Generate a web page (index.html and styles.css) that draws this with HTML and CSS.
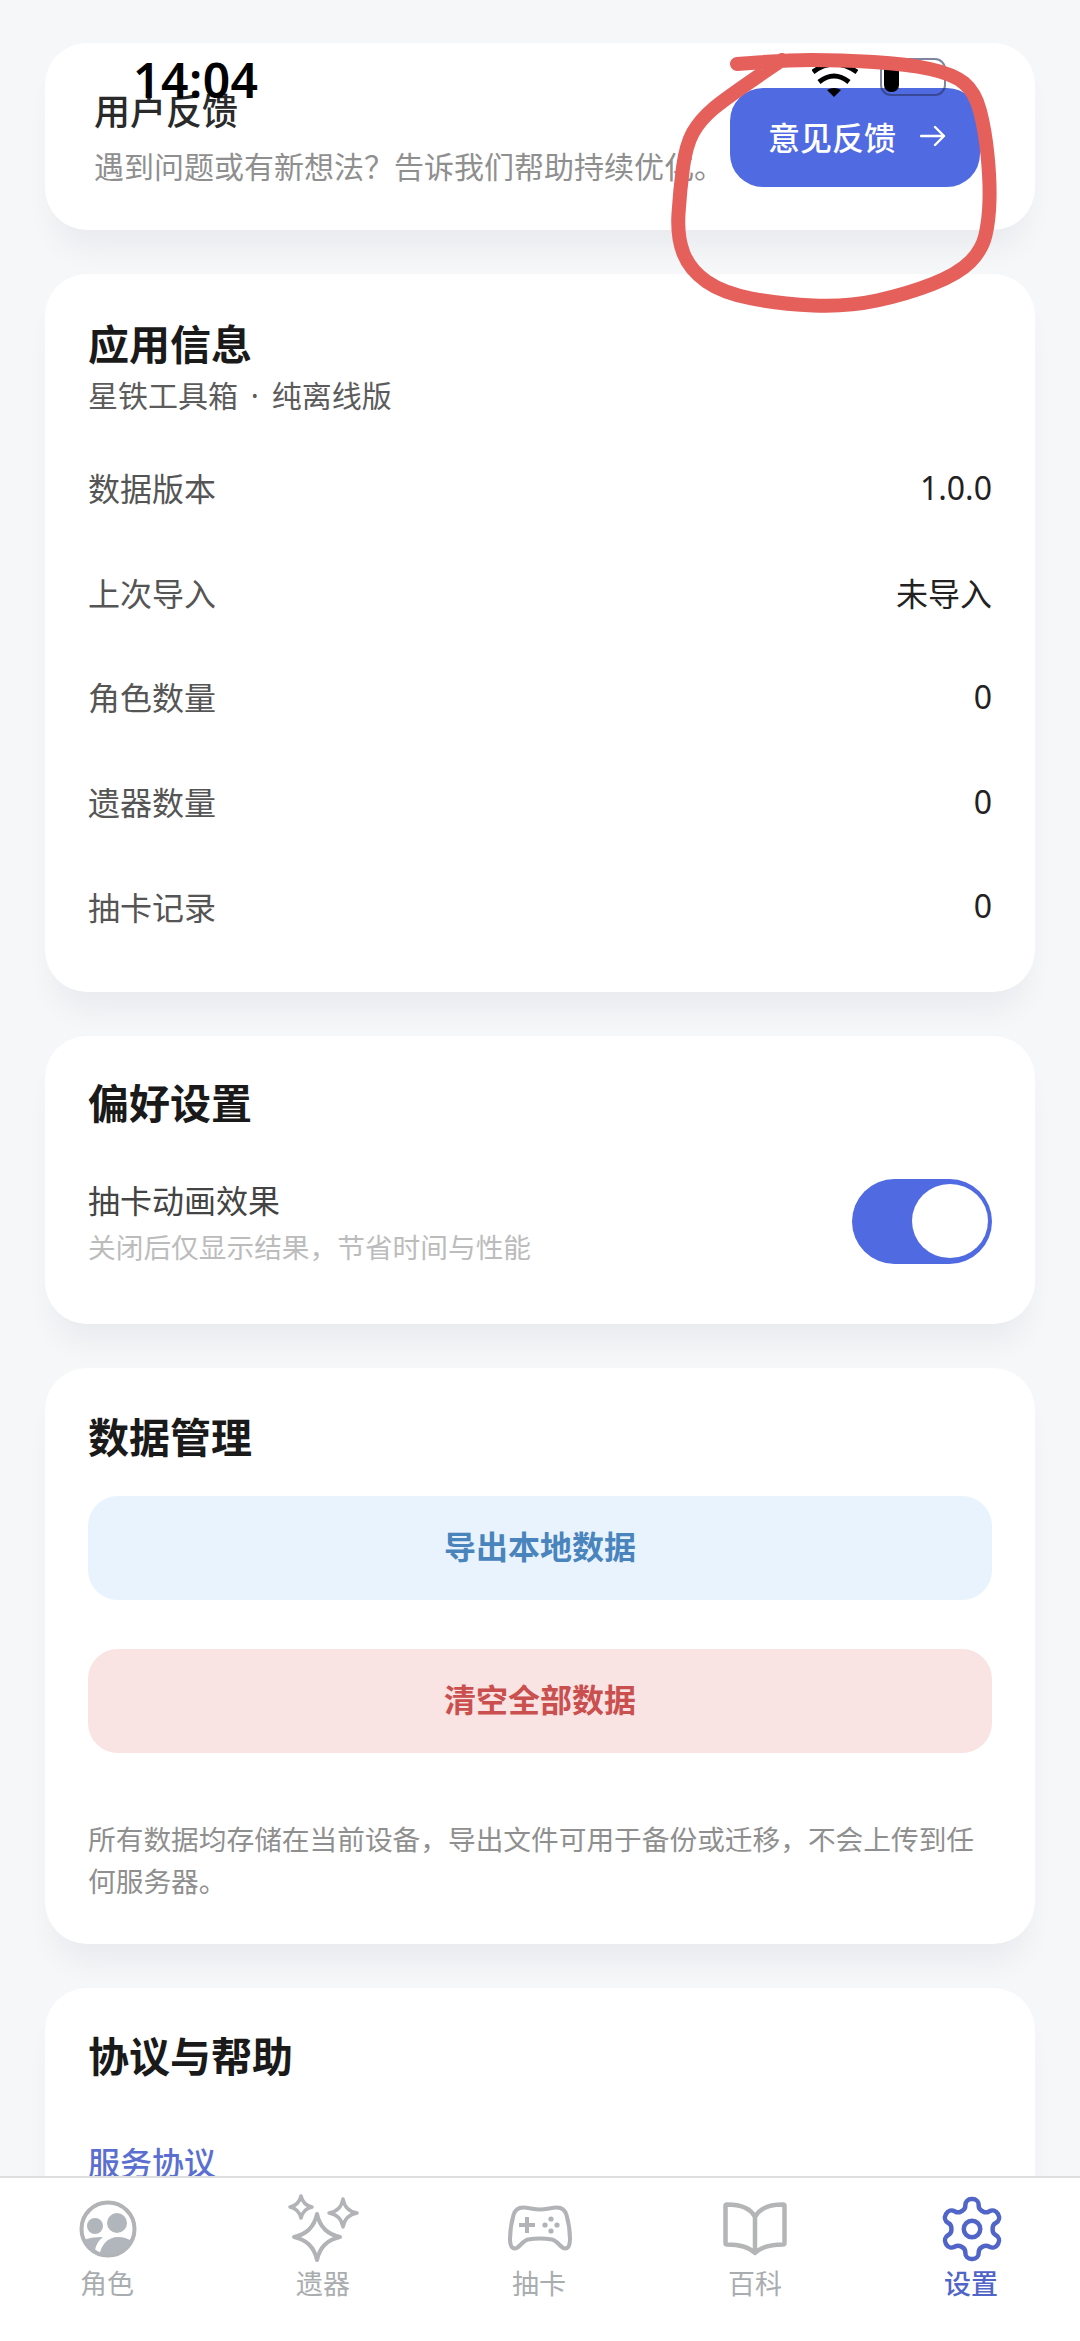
FILE: index.html
```html
<!DOCTYPE html>
<html lang="zh-CN">
<head>
    <meta charset="UTF-8">
    <meta name="viewport" content="width=device-width, initial-scale=1.0">
    <title>设置</title>
    <link rel="stylesheet" href="styles.css">
</head>
<body>
    <div class="status-bar">
        <span class="status-time">14:04</span>
        <div class="status-icons">
            <svg class="wifi-icon" viewBox="0 0 46 38" width="46" height="38">
                <path d="M22 38 L15 31 Q22 27 29 31 Z" fill="#000"/>
                <path d="M7 23 Q22 11 37 23" fill="none" stroke="#000" stroke-width="5"/>
                <path d="M1 13 Q22 -3 45 13" fill="none" stroke="#000" stroke-width="5"/>
            </svg>
            <div class="battery"><div class="battery-fill"></div></div>
        </div>
    </div>

    <main class="content">
        <section class="card feedback-card">
            <div class="feedback-text">
                <h2 class="feedback-title">用户反馈</h2>
                <p class="feedback-desc">遇到问题或有新想法&#xFF1F;告诉我们帮助持续优化。</p>
            </div>
            <a class="feedback-btn" href="#">
                <span>意见反馈</span>
                <svg viewBox="0 0 26 22" width="26" height="22">
                    <path d="M1 11 H24 M15 2 L24 11 L15 20" fill="none" stroke="#fff" stroke-width="2.4" stroke-linecap="round" stroke-linejoin="round"/>
                </svg>
            </a>
        </section>

        <section class="card info-card">
            <h2 class="card-title">应用信息</h2>
            <p class="card-sub">星铁工具箱<span class="sub-dot"> · </span>纯离线版</p>
            <div class="info-row"><span>数据版本</span><span class="info-value">1.0.0</span></div>
            <div class="info-row"><span>上次导入</span><span class="info-value">未导入</span></div>
            <div class="info-row"><span>角色数量</span><span class="info-value">0</span></div>
            <div class="info-row"><span>遗器数量</span><span class="info-value">0</span></div>
            <div class="info-row"><span>抽卡记录</span><span class="info-value">0</span></div>
        </section>

        <section class="card pref-card">
            <h2 class="card-title">偏好设置</h2>
            <div class="pref-row">
                <div>
                    <div class="pref-label">抽卡动画效果</div>
                    <div class="pref-hint">关闭后仅显示结果&#xFF0C;节省时间与性能</div>
                </div>
                <div class="toggle"><div class="toggle-knob"></div></div>
            </div>
        </section>

        <section class="card data-card">
            <h2 class="card-title">数据管理</h2>
            <button class="data-btn export-btn">导出本地数据</button>
            <button class="data-btn clear-btn">清空全部数据</button>
            <p class="data-note">所有数据均存储在当前设备&#xFF0C;导出文件可用于备份或迁移&#xFF0C;不会上传到任何服务器。</p>
        </section>

        <section class="card help-card">
            <h2 class="card-title">协议与帮助</h2>
            <a class="help-link" href="#">服务协议</a>
        </section>
    </main>

    <nav class="tab-bar">
        <a class="tab" href="#">
            <svg class="tab-icon" viewBox="0 0 64 64">
                <clipPath id="faceClip"><circle cx="32" cy="31" r="26"/></clipPath>
                <circle cx="32" cy="31" r="26.5" fill="none" stroke="#b1b3b6" stroke-width="4"/>
                <circle cx="19" cy="28" r="8" fill="#b1b6bc"/>
                <circle cx="41" cy="25" r="10" fill="#b1b6bc"/>
                <g clip-path="url(#faceClip)" fill="#b1b6bc">
                    <path d="M4 44 C10 40 18 39 27 39 C22 43 19 48 19 55 L19 62 L4 62 Z"/>
                    <path d="M23 62 C23 50 30 39 42 39 C48 39 54 41 60 46 L60 62 Z"/>
                </g>
            </svg>
            <span class="tab-label">角色</span>
        </a>
        <a class="tab" href="#">
            <svg class="tab-icon" viewBox="0 0 64 64" fill="none" stroke="#b1b3b6" stroke-linejoin="round">
                <path stroke-width="4" d="M25 16 Q29 35 48 39 Q29 43 25 62 Q21 43 2 39 Q21 35 25 16 Z"/>
                <path stroke-width="3.5" d="M9 -2 Q11 7 20 9 Q11 11 9 20 Q7 11 -2 9 Q7 7 9 -2 Z"/>
                <path stroke-width="3.5" d="M51 1 Q53 13 65 15 Q53 17 51 29 Q49 17 37 15 Q49 13 51 1 Z"/>
            </svg>
            <span class="tab-label">遗器</span>
        </a>
        <a class="tab" href="#">
            <svg class="tab-icon" viewBox="0 0 64 64" fill="none" stroke="#b1b3b6" stroke-width="4" stroke-linejoin="round">
                <path d="M15 9.5 C21 9.5 25 11.5 32 11.5 C39 11.5 43 9.5 49 9.5 C54 9.5 57 12 58.5 17 C60.5 24 62 33 62 41 C62 47 60 50.5 57 50.5 C53 50.5 50 43 44 41.5 C40 40.8 36 40.5 32 40.5 C28 40.5 24 40.8 20 41.5 C14 43 11 50.5 7 50.5 C4 50.5 2 47 2 41 C2 33 3.5 24 5.5 17 C7 12 10 9.5 15 9.5 Z"/>
                <path d="M19 19 V35 M11 27 H27"/>
                <g fill="#b1b3b6" stroke="none">
                    <circle cx="43" cy="21" r="2.6"/>
                    <circle cx="37" cy="27" r="2.6"/>
                    <circle cx="49" cy="27" r="2.6"/>
                    <circle cx="43" cy="33" r="2.6"/>
                </g>
            </svg>
            <span class="tab-label">抽卡</span>
        </a>
        <a class="tab" href="#">
            <svg class="tab-icon" viewBox="0 0 64 64" fill="none" stroke="#b3b5b7" stroke-width="4.5" stroke-linejoin="round">
                <path d="M31 19 C27 11 19 6.5 3 6.5 Q1.5 6.5 1.5 8 V45 Q1.5 46.5 3 46.5 C16 46.5 25 49 31 55 C37 49 46 46.5 59 46.5 Q60.5 46.5 60.5 45 V8 Q60.5 6.5 59 6.5 C43 6.5 35 11 31 19 Z M31 19 V55"/>
            </svg>
            <span class="tab-label">百科</span>
        </a>
        <a class="tab tab-active" href="#">
            <svg class="tab-icon" viewBox="1.33 1.67 21.33 21.33" fill="none" stroke="#5165c8" stroke-width="1.5" stroke-linejoin="round">
                <path d="M12.22 2h-.44a2 2 0 0 0-2 2v.18a2 2 0 0 1-1 1.73l-.43.25a2 2 0 0 1-2 0l-.15-.08a2 2 0 0 0-2.73.73l-.22.38a2 2 0 0 0 .73 2.73l.15.1a2 2 0 0 1 1 1.72v.51a2 2 0 0 1-1 1.74l-.15.09a2 2 0 0 0-.73 2.73l.22.38a2 2 0 0 0 2.73.73l.15-.08a2 2 0 0 1 2 0l.43.25a2 2 0 0 1 1 1.73V20a2 2 0 0 0 2 2h.44a2 2 0 0 0 2-2v-.18a2 2 0 0 1 1-1.73l.43-.25a2 2 0 0 1 2 0l.15.08a2 2 0 0 0 2.73-.73l.22-.39a2 2 0 0 0-.73-2.73l-.15-.08a2 2 0 0 1-1-1.74v-.5a2 2 0 0 1 1-1.74l.15-.09a2 2 0 0 0 .73-2.73l-.22-.38a2 2 0 0 0-2.73-.73l-.15.08a2 2 0 0 1-2 0l-.43-.25a2 2 0 0 1-1-1.73V4a2 2 0 0 0-2-2z"/>
                <circle cx="12" cy="12" r="2.75"/>
            </svg>
            <span class="tab-label">设置</span>
        </a>
    </nav>

    <!-- red pen circle drawn over the screenshot -->
    <svg class="annotation" viewBox="0 0 1080 340" width="1080" height="340">
        <path d="M737 64 Q783 60 811.5 60 Q840 60 873.5 62 Q907 64 930 69 Q953 74 964 83 Q975 92 980 111 Q985 130 987.5 155 Q990 180 989.5 200 Q989 220 985.5 235 Q982 250 970 262 Q958 274 932.5 284 Q907 294 877 300.5 Q847 307 813.5 305.5 Q780 304 751.5 298.5 Q723 293 706.5 281.5 Q690 270 683.5 253.5 Q677 237 678.5 213.5 Q680 190 683 167.5 Q686 145 693 132.5 Q700 120 713.5 108.5 Q727 97 782 60" fill="none" stroke="#e55f5b" stroke-width="14" stroke-linecap="round" stroke-linejoin="round"/>
    </svg>
</body>
</html>
```

FILE: styles.css
```css
* {
    box-sizing: border-box;
}

body {
    margin: 0;
    height: 100vh;
    display: flex;
    flex-direction: column;
    overflow: hidden;
    background-color: #f6f7f9;
    font-family: "Noto Sans CJK SC", "Noto Sans", sans-serif;
    color: #222;
}

h2, p {
    margin: 0;
}

a {
    text-decoration: none;
}

/* status bar sits on top of the scrolled page */
.status-bar {
    position: absolute;
    top: 0;
    left: 0;
    right: 0;
    z-index: 5;
    display: flex;
    justify-content: space-between;
    padding: 48px 134px 0 133px;
}

.status-time {
    font-family: "Noto Sans", sans-serif;
    font-size: 48px;
    font-weight: 600;
    letter-spacing: 0.5px;
    line-height: 64px;
    color: #000;
}

.status-icons {
    display: flex;
    gap: 22px;
    padding-top: 11px;
}

.battery {
    width: 66px;
    height: 38px;
    margin-top: -1px;
    padding: 2px;
    border: 2px solid rgba(40, 50, 100, 0.6);
    border-radius: 11px;
}

.battery-fill {
    width: 15px;
    height: 100%;
    background-color: #000;
    border-radius: 7px;
}

.annotation {
    position: absolute;
    top: 0;
    left: 0;
    z-index: 10;
}

.content {
    flex: 1;
    min-height: 0;
    overflow: hidden;
    display: flex;
    flex-direction: column;
    gap: 44px;
    padding: 43px 45px 0;
}

.card {
    flex-shrink: 0;
    background-color: #fff;
    border-radius: 42px;
    padding: 43px;
    box-shadow: 0 26px 30px -8px rgba(20, 25, 35, 0.05);
}

.card-title {
    font-size: 41px;
    font-weight: 700;
    line-height: 50px;
    color: #1a1a1a;
}

/* feedback */
.feedback-card {
    display: flex;
    justify-content: space-between;
    height: 187px;
    padding: 44px 55px 0 49px;
}

.feedback-text {
    width: 620px;
    flex-shrink: 0;
}

.feedback-title {
    font-size: 36px;
    font-weight: 500;
    line-height: 44px;
    color: #2a2a2a;
}

.feedback-desc {
    margin-top: 13px;
    font-size: 30px;
    line-height: 42px;
    color: #8f8f8f;
    white-space: nowrap;
}

.feedback-btn {
    width: 250px;
    height: 99px;
    margin-top: 1px;
    display: flex;
    align-items: center;
    justify-content: center;
    gap: 24px;
    padding: 0 0 4px 4px;
    background-color: #506ae2;
    border-radius: 33px;
    font-size: 32px;
    font-weight: 500;
    color: #fff;
}

/* app info */
.info-card {
    height: 718px;
    padding-top: 43px;
    padding-bottom: 0;
}

.card-sub {
    margin-top: 6px;
    font-size: 30px;
    line-height: 42px;
    color: #5c5c5c;
}

.sub-dot {
    font-family: "Noto Sans", sans-serif;
    margin: 0 5px;
}

.info-card .card-sub {
    margin-bottom: 18px;
}

.info-row {
    height: 104.6px;
    display: flex;
    align-items: center;
    justify-content: space-between;
    font-size: 32px;
    color: #555;
}

.info-value {
    color: #222;
    font-family: "Noto Sans", "Noto Sans CJK SC", sans-serif;
}

/* preferences */
.pref-card {
    height: 288px;
    padding-top: 40px;
    padding-bottom: 0;
}

.pref-row {
    display: flex;
    align-items: center;
    justify-content: space-between;
    margin-top: 51px;
}

.pref-label {
    font-size: 32px;
    line-height: 44px;
    color: #444;
}

.pref-hint {
    margin-top: 6px;
    font-size: 27.7px;
    line-height: 38px;
    color: #bcbcbc;
}

.toggle {
    width: 140px;
    height: 85px;
    display: flex;
    justify-content: flex-end;
    align-items: center;
    padding: 0 4px;
    background-color: #506ae2;
    border-radius: 43px;
}

.toggle-knob {
    width: 76px;
    height: 74px;
    background-color: #fff;
    border-radius: 50%;
}

/* data */
.data-card {
    height: 576px;
    padding-top: 42px;
    padding-bottom: 0;
}

.data-btn {
    display: block;
    width: 100%;
    height: 104px;
    margin-top: 49px;
    padding: 0 0 7px;
    border: 0;
    border-radius: 30px;
    font-family: inherit;
    font-size: 32px;
    font-weight: 700;
}

.data-card .card-title + .data-btn {
    margin-top: 36px;
}

.export-btn {
    background-color: #e8f3fd;
    color: #4a84bd;
}

.clear-btn {
    background-color: #f9e3e3;
    color: #c9504f;
}

.data-note {
    margin-top: 64px;
    font-size: 27.7px;
    line-height: 42px;
    color: #8f8f8f;
}

/* help */
.help-card {
    padding-top: 41px;
}

.help-link {
    display: block;
    margin-top: 60px;
    font-size: 32px;
    font-weight: 500;
    line-height: 44px;
    color: #5b6fd0;
}

/* tab bar */
.tab-bar {
    height: 165px;
    flex-shrink: 0;
    display: flex;
    padding-top: 20px;
    background-color: #fff;
    border-top: 2px solid #dcdee0;
}

.tab {
    flex: 1;
    display: flex;
    flex-direction: column;
    align-items: center;
    color: #aaadb0;
}

.tab-icon {
    width: 64px;
    height: 64px;
    overflow: visible;
}

.tab-label {
    margin: 4px 2px 0 0;
    font-size: 27px;
    line-height: 34px;
}

.tab-active {
    color: #5165c8;
    font-weight: 500;
}
```
